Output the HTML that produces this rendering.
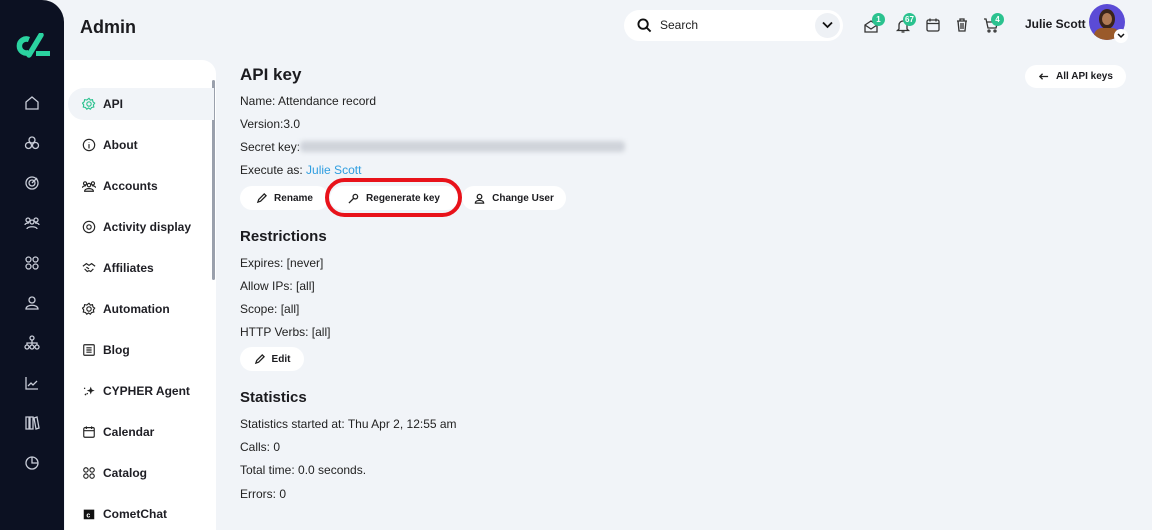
<!DOCTYPE html>
<html><head><meta charset="utf-8"><style>
*{box-sizing:border-box;margin:0;padding:0}
body{width:1152px;height:530px;overflow:hidden;background:#f1f4f8;font-family:"Liberation Sans",sans-serif;color:#1b1b1f;position:relative}
.dark{position:absolute;left:0;top:0;width:64px;height:530px;background:#0c1122;border-top-right-radius:22px}
.dark svg.i{position:absolute;left:24px;width:16px;height:16px;stroke:#c9cdd8;fill:none;stroke-width:1.3}
.menu{position:absolute;left:65px;top:60px;width:151px;height:470px;background:#fff;border-top-right-radius:14px}
.sb{position:absolute;left:212px;top:80px;width:3px;height:200px;background:#9aa0ac;border-radius:2px}
.mi{position:absolute;left:3px;width:141px;height:32px;font-size:12px;font-weight:bold;display:flex;align-items:center;padding-left:35px;color:#1e1e24}
.mi.act{background:#f1f4f8;border-radius:16px 0 0 16px;width:146px}
.mi svg{position:absolute;left:14px;width:14px;height:14px;fill:none;stroke:#222;stroke-width:1.3}
h1{position:absolute;left:80px;top:17px;font-size:18px;font-weight:900}
.search{position:absolute;left:624px;top:10px;width:219px;height:31px;background:#fff;border-radius:16px}
.search span{position:absolute;left:36px;top:8px;font-size:12px;color:#222}
.dd{position:absolute;right:3px;top:3px;width:25px;height:25px;border-radius:50%;background:#eef1f5}
.badge{position:absolute;height:13px;min-width:13px;border-radius:7px;background:#2bc28f;color:#fff;font-size:8px;font-weight:bold;text-align:center;line-height:13px;padding:0 2px}
.top svg{position:absolute;width:16px;height:16px;fill:none;stroke:#333;stroke-width:1.3}
.txt{position:absolute;left:240px;font-size:12px;color:#222}
.h2{position:absolute;left:240px;font-size:15px;font-weight:900}
.btn{position:absolute;height:24px;background:#fff;border-radius:12px;font-size:10px;font-weight:bold;display:flex;align-items:center;justify-content:center;gap:7px}
.btn svg{width:11px;height:11px;fill:none;stroke:#222;stroke-width:1.4}
</style></head><body>
<div class="dark">
<svg style="position:absolute;left:12px;top:33px" width="40" height="26" viewBox="0 0 40 26"><path d="M17 6.5 A7 7 0 1 0 17 19.5" stroke="#2bd3a0" stroke-width="5.5" fill="none"/><path d="M29 2 L17 22" stroke="#2bd3a0" stroke-width="5.5" stroke-linecap="round"/><rect x="24" y="18" width="14" height="5" fill="#2bd3a0"/></svg>
<svg class="i" style="top:95px" viewBox="0 0 16 16"><path d="M2 7L8 2l6 5v7H2z"/></svg>
<svg class="i" style="top:135px" viewBox="0 0 16 16"><circle cx="8" cy="5" r="3"/><circle cx="4.5" cy="10.5" r="3"/><circle cx="11.5" cy="10.5" r="3"/></svg>
<svg class="i" style="top:175px" viewBox="0 0 16 16"><circle cx="8" cy="8" r="6"/><circle cx="8" cy="8" r="3"/><path d="M8 8l5-5"/></svg>
<svg class="i" style="top:215px" viewBox="0 0 16 16"><circle cx="4" cy="5" r="2"/><circle cx="12" cy="5" r="2"/><circle cx="8" cy="7" r="2"/><path d="M3 14c0-3 10-3 10 0M1 10c0-2 4-2 4-2M15 10c0-2-4-2-4-2"/></svg>
<svg class="i" style="top:255px" viewBox="0 0 16 16"><circle cx="4.5" cy="4.5" r="2.5"/><circle cx="11.5" cy="4.5" r="2.5"/><circle cx="4.5" cy="11.5" r="2.5"/><circle cx="11.5" cy="11.5" r="2.5"/></svg>
<svg class="i" style="top:295px" viewBox="0 0 16 16"><circle cx="8" cy="5" r="3"/><path d="M2 14c0-5 12-5 12 0z"/></svg>
<svg class="i" style="top:335px" viewBox="0 0 16 16"><circle cx="8" cy="3" r="2"/><circle cx="3" cy="12" r="2"/><circle cx="8" cy="12" r="2"/><circle cx="13" cy="12" r="2"/><path d="M8 5v5M3 10V8h10v2"/></svg>
<svg class="i" style="top:375px" viewBox="0 0 16 16"><path d="M2 2v12h12M4 11l3-3 2 2 4-4"/></svg>
<svg class="i" style="top:415px" viewBox="0 0 16 16"><path d="M2 2h3v12H2zM6 2h3v12H6zM10 3l3-1 2 11-3 1z"/></svg>
<svg class="i" style="top:455px" viewBox="0 0 16 16"><circle cx="8" cy="8" r="6"/><path d="M8 2v6h6"/></svg>
</div>
<h1>Admin</h1>
<div class="menu"></div>
<div class="sb"></div>
<div style="position:absolute;left:65px;top:0">
<div class="mi act" style="top:88px"><svg viewBox="0 0 16 16" style="stroke:#2bc28f"><circle cx="8" cy="8" r="2.5"/><path d="M8 1.5l1.5 2 2.5-.5.5 2.5 2 1.5-1.5 2 .5 2.5-2.5.5-1.5 2-2-1.5-2 1.5-1.5-2-2.5-.5.5-2.5-1.5-2 2-1.5.5-2.5 2.5.5z"/></svg>API</div>
<div class="mi" style="top:129px"><svg viewBox="0 0 16 16"><circle cx="8" cy="8" r="6.5"/><path d="M8 7v5M8 4.5v.5"/></svg>About</div>
<div class="mi" style="top:170px"><svg viewBox="0 0 16 16"><circle cx="3.5" cy="5" r="1.8"/><circle cx="12.5" cy="5" r="1.8"/><circle cx="8" cy="7" r="2"/><path d="M3 14c0-4 10-4 10 0zM0.5 10c0-2 3-2.5 4-2M15.5 10c0-2-3-2.5-4-2"/></svg>Accounts</div>
<div class="mi" style="top:211px"><svg viewBox="0 0 16 16"><circle cx="8" cy="8" r="6.5"/><circle cx="8" cy="8" r="2.5"/></svg>Activity display</div>
<div class="mi" style="top:252px"><svg viewBox="0 0 16 16"><path d="M1 6l4-3 3 2 3-2 4 3M3 9l3 3 2-1 2 1 3-3M5 7l3 2"/></svg>Affiliates</div>
<div class="mi" style="top:293px"><svg viewBox="0 0 16 16"><circle cx="8" cy="8" r="2.5"/><path d="M8 1.5l1.5 2 2.5-.5.5 2.5 2 1.5-1.5 2 .5 2.5-2.5.5-1.5 2-2-1.5-2 1.5-1.5-2-2.5-.5.5-2.5-1.5-2 2-1.5.5-2.5 2.5.5z"/></svg>Automation</div>
<div class="mi" style="top:334px"><svg viewBox="0 0 16 16"><rect x="2" y="2" width="12" height="12" rx="1"/><path d="M5 5.5h6M5 8h6M5 10.5h6"/></svg>Blog</div>
<div class="mi" style="top:375px"><svg viewBox="0 0 16 16" style="fill:#222;stroke:none"><path d="M10 3l1.2 3.3L14.5 7.5 11.2 8.7 10 12 8.8 8.7 5.5 7.5 8.8 6.3z"/><circle cx="4" cy="12" r="1"/><circle cx="3" cy="5" r=".8"/><circle cx="6" cy="11" r=".8"/></svg>CYPHER Agent</div>
<div class="mi" style="top:416px"><svg viewBox="0 0 16 16"><rect x="2" y="3" width="12" height="11" rx="1.5"/><path d="M5 1.5v3M11 1.5v3M2 6.5h12"/></svg>Calendar</div>
<div class="mi" style="top:457px"><svg viewBox="0 0 16 16"><circle cx="4.5" cy="4.5" r="2.5"/><circle cx="11.5" cy="4.5" r="2.5"/><circle cx="4.5" cy="11.5" r="2.5"/><circle cx="11.5" cy="11.5" r="2.5"/></svg>Catalog</div>
<div class="mi" style="top:498px"><svg viewBox="0 0 16 16" style="fill:#111;stroke:none"><path d="M2 3h12v11H2z"/><text x="5" y="12" font-size="8" fill="#fff" font-family="Liberation Sans" font-weight="bold">c</text></svg>CometChat</div>
</div>
<div class="search"><svg style="position:absolute;left:13px;top:8px" width="15" height="15" viewBox="0 0 16 16" fill="none" stroke="#111" stroke-width="2"><circle cx="6.5" cy="6.5" r="5"/><path d="M10.5 10.5l4 4"/></svg><span>Search</span><div class="dd"><svg style="position:absolute;left:7px;top:8px" width="11" height="8" viewBox="0 0 11 8" fill="none" stroke="#111" stroke-width="1.8"><path d="M1 1.5l4.5 4.5L10 1.5"/></svg></div></div>
<div class="top">
<svg style="left:863px;top:18px" viewBox="0 0 16 16"><path d="M2 7l6-4 6 4v7H2zM2 7l6 4 6-4"/></svg>
<div class="badge" style="left:872px;top:13px">1</div>
<svg style="left:895px;top:18px" viewBox="0 0 16 16"><path d="M4 11V7a4 4 0 018 0v4l1.5 1.5h-11zM6.5 14h3"/></svg>
<div class="badge" style="left:903px;top:13px">67</div>
<svg style="left:925px;top:17px" viewBox="0 0 16 16"><rect x="2" y="3" width="12" height="11" rx="1.5"/><path d="M5 1.5v3M11 1.5v3M2 6.5h12"/></svg>
<svg style="left:954px;top:17px" viewBox="0 0 16 16"><path d="M3 4h10M6 4V2h4v2M4 4l1 10h6l1-10M7 6v6M9 6v6"/></svg>
<svg style="left:983px;top:17px" viewBox="0 0 16 16"><path d="M1 2h2l2 9h8l1.5-6H4"/><circle cx="6" cy="14" r="1"/><circle cx="12" cy="14" r="1"/></svg>
<div class="badge" style="left:991px;top:13px">4</div>
</div>
<div style="position:absolute;left:1025px;top:17px;font-size:12px;font-weight:bold">Julie Scott</div>
<div style="position:absolute;left:1089px;top:4px;width:36px;height:36px;border-radius:50%;background:#5b4bd6;overflow:hidden"><div style="position:absolute;left:10px;top:5px;width:16px;height:20px;border-radius:50%;background:#3b2419"></div><div style="position:absolute;left:13px;top:9px;width:10px;height:12px;border-radius:50%;background:#b07a55"></div><div style="position:absolute;left:5px;top:24px;width:26px;height:16px;border-radius:8px 8px 0 0;background:#9a5a2a"></div></div>
<div style="position:absolute;left:1114px;top:29px;width:14px;height:14px;border-radius:50%;background:#fff"><svg style="position:absolute;left:3px;top:4px" width="8" height="6" viewBox="0 0 8 6" fill="none" stroke="#111" stroke-width="1.5"><path d="M1 1l3 3 3-3"/></svg></div>
<div class="btn" style="left:1025px;top:65px;width:101px;height:23px"><svg viewBox="0 0 12 12"><path d="M11 6H2M5 3L2 6l3 3"/></svg>All API keys</div>
<div class="h2" style="top:65px;font-size:17px">API key</div>
<div class="txt" style="top:94px">Name: Attendance record</div>
<div class="txt" style="top:117px">Version:3.0</div>
<div class="txt" style="top:140px">Secret key:</div>
<div style="position:absolute;left:300px;top:141px;width:325px;height:11px;background:#cfd3da;filter:blur(2.5px);border-radius:4px"></div>
<div class="txt" style="top:163px">Execute as: <span style="color:#2f9ee0">Julie Scott</span></div>
<div class="btn" style="left:240px;top:186px;width:89px"><svg viewBox="0 0 12 12"><path d="M2 10l1-3 6-6 2 2-6 6z"/></svg>Rename</div>
<div class="btn" style="left:330px;top:186px;width:128px"><svg viewBox="0 0 12 12"><circle cx="8" cy="4" r="2.5"/><path d="M6 6l-5 5"/></svg>Regenerate key</div>
<div style="position:absolute;left:325px;top:178px;width:137px;height:39px;border:4px solid #e8121a;border-radius:20px"></div>
<div class="btn" style="left:462px;top:186px;width:104px"><svg viewBox="0 0 12 12"><circle cx="6" cy="4" r="2.5"/><path d="M1.5 11c0-4 9-4 9 0z"/></svg>Change User</div>
<div class="h2" style="top:228px">Restrictions</div>
<div class="txt" style="top:256px">Expires: [never]</div>
<div class="txt" style="top:279px">Allow IPs: [all]</div>
<div class="txt" style="top:302px">Scope: [all]</div>
<div class="txt" style="top:325px">HTTP Verbs: [all]</div>
<div class="btn" style="left:240px;top:347px;width:64px"><svg viewBox="0 0 12 12"><path d="M2 10l1-3 6-6 2 2-6 6z"/></svg>Edit</div>
<div class="h2" style="top:389px">Statistics</div>
<div class="txt" style="top:417px">Statistics started at: Thu Apr 2, 12:55 am</div>
<div class="txt" style="top:440px">Calls: 0</div>
<div class="txt" style="top:463px">Total time: 0.0 seconds.</div>
<div class="txt" style="top:487px">Errors: 0</div>
</body></html>
